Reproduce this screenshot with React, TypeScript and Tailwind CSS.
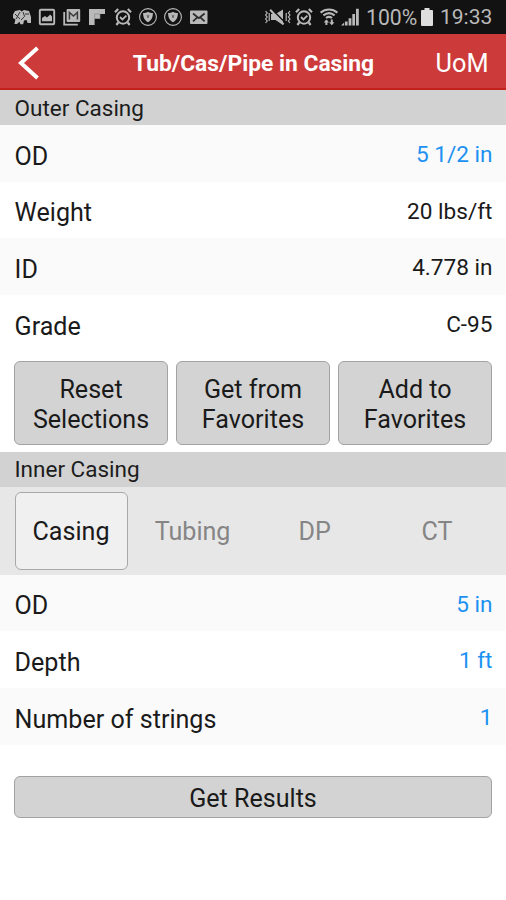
import React from 'react'

type Row = {
  label: string
  value: string
  editable?: boolean
}

const outerRows: Row[] = [
  { label: 'OD', value: '5 1/2 in', editable: true },
  { label: 'Weight', value: '20 lbs/ft' },
  { label: 'ID', value: '4.778 in' },
  { label: 'Grade', value: 'C-95' },
]

const innerRows: Row[] = [
  { label: 'OD', value: '5 in', editable: true },
  { label: 'Depth', value: '1 ft', editable: true },
  { label: 'Number of strings', value: '1', editable: true },
]

function AlarmIcon() {
  return (
    <svg viewBox="0 0 20 20" className="h-5 w-5 shrink-0" fill="none" stroke="currentColor">
      <circle cx="10" cy="10.5" r="6.2" strokeWidth="2" />
      <path d="M2 5.2 5.2 2M18 5.2 14.8 2M5.2 15.5 3.4 18M14.8 15.5l1.8 2.5" strokeWidth="2.2" />
      <path d="m7 10 2.4 2.4L13.4 8.6" strokeWidth="1.8" />
    </svg>
  )
}

function ShieldIcon() {
  return (
    <svg viewBox="0 0 20 20" className="h-5 w-5 shrink-0">
      <circle cx="10" cy="10" r="8.4" fill="none" stroke="currentColor" strokeWidth="1.1" />
      <path d="M10 4.8c1.6 1 3.2 1.3 4.9 1.3 0 4.4-1.3 7.3-4.9 9.2-3.6-1.9-4.9-4.8-4.9-9.2 1.7 0 3.3-.3 4.9-1.3z" fill="currentColor" />
      <path d="M9 7.8 10 11l1-3.2" fill="none" stroke="#666" strokeWidth="1" />
    </svg>
  )
}

function StatusBar() {
  return (
    <div className="flex h-[34px] shrink-0 items-center bg-[#121212] pl-[11.5px] pr-[13px] text-[#b9b9b9]">
      <div className="flex items-center gap-[5.3px]">
        <svg viewBox="0 0 20 20" className="h-5 w-5 shrink-0">
          <path d="M1 7.5 3 4l5-1 1.5 1.5L12 3l5 1 2 6v6h-3.4l-1-3-2.6.6-.8 3.6H8.4l-1-2.4L5 17H2.4l1-4.6L1 11z" fill="currentColor" />
          <path d="m3 7 5 5M8 5 4 12M11 5l1.6 4.4L9 13M13 7h4" fill="none" stroke="#333" strokeWidth="1" />
        </svg>
        <svg viewBox="0 0 20 20" className="h-5 w-5 shrink-0">
          <rect x="2.8" y="2.8" width="14.4" height="14.4" rx="1" fill="none" stroke="currentColor" strokeWidth="1.9" />
          <path d="M5 14.3V11l3-2 2 1.4 3.2-3 1.8 2v4.9z" fill="currentColor" />
        </svg>
        <svg viewBox="0 0 20 20" className="h-5 w-5 shrink-0" fill="none" stroke="currentColor">
          <path d="M2.2 5v12.6h13.6" strokeWidth="1.8" />
          <rect x="4.6" y="2" width="13.6" height="13" rx="1" fill="currentColor" stroke="none" />
          <path d="M7.4 12.6V5.4l4 3.6 4-3.6v7.2" stroke="#3b3b3b" strokeWidth="1.5" />
        </svg>
        <svg viewBox="0 0 20 20" className="h-5 w-5 shrink-0">
          <path d="M2 2h16v5h-5v4.8H7.6V18H2z" fill="currentColor" />
          <path d="M7.6 7H13v4.8M7.6 7v4.8" fill="none" stroke="#8a8a8a" strokeWidth=".7" />
        </svg>
        <AlarmIcon />
        <ShieldIcon />
        <ShieldIcon />
        <svg viewBox="0 0 20 20" className="h-5 w-5 shrink-0">
          <rect x="1" y="3.5" width="17.5" height="13.6" rx="1" fill="currentColor" />
          <path d="m4 6.5 5.8 4.6 5.8-4.6M4 14.3l4-3.6M15.6 14.3l-4-3.6" fill="none" stroke="#2a2a2a" strokeWidth="1.7" />
        </svg>
      </div>
      <div className="ml-auto flex items-center">
        <svg viewBox="0 0 28 20" className="h-5 w-7 shrink-0" fill="none" stroke="currentColor">
          <path d="M7 7h4.5L19 2.5V18l-7.5-5H7z" fill="currentColor" stroke="none" />
          <path d="M8 2.2 21 15.6" stroke="#121212" strokeWidth="1.4" />
          <path d="M6.2 2.8 19.6 17.4" strokeWidth="2" />
          <path d="m1.6 4 1.6 2-1.6 2 1.6 2-1.6 2 1.6 2-1.6 2M5.2 6v8M22.2 6v8M26 4l-1.6 2L26 8l-1.6 2 1.6 2-1.6 2 1.6 2" strokeWidth="1.2" />
        </svg>
        <div className="ml-0.5">
          <AlarmIcon />
        </div>
        <svg viewBox="0 0 20 20" className="ml-[5px] h-5 w-5 shrink-0" fill="none" stroke="currentColor">
          <path d="M1.6 5.6c4.8-4.2 12-4.2 16.8 0M4.4 8.4c3.4-2.8 7.8-2.8 11.2 0M7 11c1.8-1.4 4.2-1.4 6 0" strokeWidth="2.1" />
          <path d="M7.4 18v-4.5M12.8 12.5V17" strokeWidth="2" />
          <path d="m4.7 15.4 2.7-3 2.7 3zM10.1 15.2l2.7 3 2.7-3z" fill="currentColor" stroke="none" />
        </svg>
        <svg viewBox="0 0 18 20" className="ml-[2px] h-5 w-[18px] shrink-0" fill="currentColor">
          <path d="M0 18.4 3.2 15.6v2.8zM4 14.6h2.6v3.8H4zM7.6 11.2h2.8v7.2H7.6zM11.3 7h2.7v11.4h-2.7zM15 1.8h2.8v16.6H15z" />
        </svg>
        <span className="ml-[7px] w-[51px] whitespace-nowrap pt-0.5 text-[21.2px] leading-none">100%</span>
        <svg viewBox="0 0 12 18" className="ml-1 h-[18px] w-3 shrink-0" fill="#dedede">
          <path d="M3.5 0h5v2H11a1 1 0 0 1 1 1v14a1 1 0 0 1-1 1H1a1 1 0 0 1-1-1V3a1 1 0 0 1 1-1h2.5z" />
        </svg>
        <span className="ml-[7px] w-[53px] whitespace-nowrap pt-0.5 text-[21px] leading-none">19:33</span>
      </div>
    </div>
  )
}

function SectionTitle({ children }: { children: React.ReactNode }) {
  return (
    <div className="flex h-[35px] shrink-0 items-center bg-[#d2d2d2] px-[14.5px] pt-0.5 text-[22.5px] text-[#1c1c1c]">
      {children}
    </div>
  )
}

function Rows({ rows }: { rows: Row[] }) {
  return (
    <div>
      {rows.map((row) => (
        <div
          key={row.label}
          className="flex h-[56.7px] items-center justify-between pl-[14.6px] pr-[13.5px] odd:bg-[#fafafa] even:bg-white"
        >
          <span className="pt-[6px] text-[25.1px]">{row.label}</span>
          <span className={row.editable ? 'pt-[3px] text-[22.6px] text-[#1c91f2]' : 'pt-[3px] text-[22.6px] text-[#1a1a1a]'}>
            {row.value}
          </span>
        </div>
      ))}
    </div>
  )
}

function FavoriteButton({ first, second }: { first: string; second: string }) {
  return (
    <button className="h-[84px] rounded-md border border-[#a3a3a3] bg-[#d3d3d3] pt-[5px] text-[25.1px] leading-[30px]">
      {first}
      <br />
      {second}
    </button>
  )
}

export default function App() {
  return (
    <div className="flex h-[900px] w-[506px] flex-col overflow-hidden bg-white font-['Roboto',sans-serif] text-[#1a1a1a]">
      <StatusBar />
      <header className="grid h-14 shrink-0 grid-cols-[80px_1fr_80px] items-center border-b-2 border-[#c4201a] bg-[#cd3a3a] text-white">
        <button className="pl-[18px] pt-[3px]" aria-label="Back">
          <svg viewBox="0 0 22 34" className="h-[34px] w-[22px]" fill="none" stroke="currentColor" strokeWidth="4">
            <path d="M19.5 2 3 17l16.5 15" />
          </svg>
        </button>
        <h1 className="whitespace-nowrap pl-px pt-[7px] text-center text-[22.8px] font-bold">Tub/Cas/Pipe in Casing</h1>
        <button className="pr-[17.5px] pt-[6px] text-right text-[25.3px]">UoM</button>
      </header>
      <SectionTitle>Outer Casing</SectionTitle>
      <Rows rows={outerRows} />
      <div className="grid grid-cols-3 gap-2 px-[14px] pb-[7px] pt-[9px]">
        <FavoriteButton first="Reset" second="Selections" />
        <FavoriteButton first="Get from" second="Favorites" />
        <FavoriteButton first="Add to" second="Favorites" />
      </div>
      <SectionTitle>Inner Casing</SectionTitle>
      <div className="grid h-[88px] shrink-0 grid-cols-[113px_1fr_1fr_1fr] items-center gap-x-2 bg-[#e7e7e7] pl-[14.5px] pr-[12px] text-[25.1px] text-[#858585]">
        <button className="h-[78px] rounded-md border border-[#a8a8a8] bg-[#f0f0f0] pt-[3px] text-[#1a1a1a]">Casing</button>
        <button className="pt-[3px]">Tubing</button>
        <button className="pt-[3px]">DP</button>
        <button className="pt-[3px]">CT</button>
      </div>
      <Rows rows={innerRows} />
      <div className="px-[14px] pt-[31px]">
        <button className="h-[42px] w-full rounded-md border border-[#a3a3a3] bg-[#d3d3d3] pt-[3px] text-[25.1px]">
          Get Results
        </button>
      </div>
    </div>
  )
}
